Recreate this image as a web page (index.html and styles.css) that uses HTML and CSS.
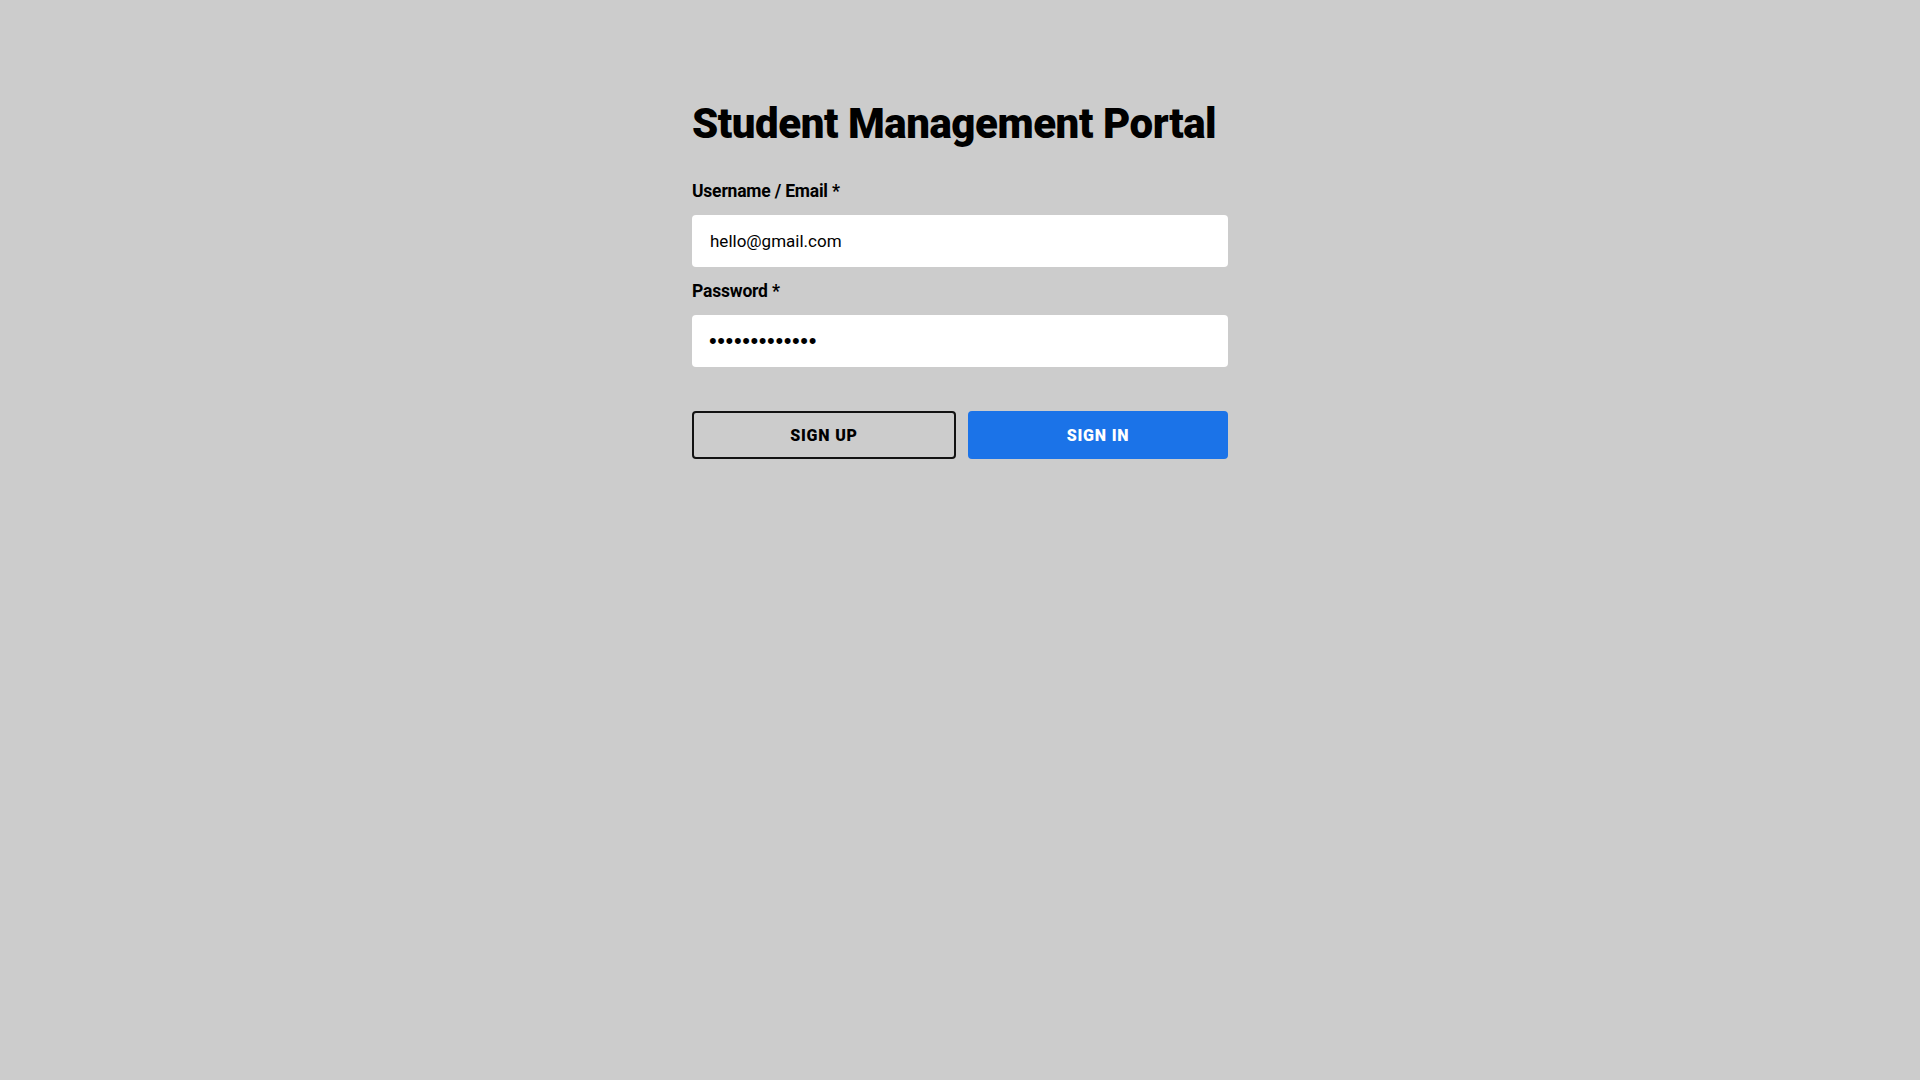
FILE: index.html
```html
<!DOCTYPE html>
<html lang="en">
<head>
<meta charset="utf-8">
<title>Student Management Portal</title>
<link rel="stylesheet" href="styles.css">
</head>
<body>
<main class="page">
  <form class="login" onsubmit="return false">
    <h1 class="title">Student Management Portal</h1>
    <label class="label" for="user">Username / Email *</label>
    <input class="field" id="user" type="text" value="hello@gmail.com">
    <label class="label label-pass" for="pass">Password *</label>
    <input class="field field-pass" id="pass" type="password" value="abcdefghijklm">
    <div class="actions">
      <button class="btn btn-outline" type="button">SIGN UP</button>
      <button class="btn btn-primary" type="submit">SIGN IN</button>
    </div>
  </form>
</main>
</body>
</html>
```

FILE: styles.css
```css
html, body {
  margin: 0;
  padding: 0;
  background: #cccccc;
  height: 100%;
}
body {
  font-family: Roboto, "Liberation Sans", sans-serif;
  color: #000;
}
.page {
  display: flex;
  justify-content: center;
  padding-top: 100px;
}
.login {
  width: 536px;
  display: flex;
  flex-direction: column;
}
.title {
  margin: 0 0 32px 0;
  font-size: 42px;
  font-weight: 900;
  line-height: 48px;
  letter-spacing: -0.45px;
  white-space: nowrap;
}
.label {
  font-size: 17.5px;
  font-weight: 700;
  line-height: 22px;
  letter-spacing: -0.2px;
  margin-bottom: 13px;
}
.label-pass {
  margin-top: 13px;
}
.field {
  box-sizing: border-box;
  height: 52px;
  border: none;
  border-radius: 4px;
  background: #fff;
  padding: 0 18px;
  font-family: Roboto, "Liberation Sans", sans-serif;
  font-size: 17px;
  color: #000;
  outline: none;
}
.field-pass {
  font-family: "Liberation Sans", sans-serif;
  font-size: 22px;
  letter-spacing: 0.6px;
  padding-left: 17px;
}
.actions {
  display: flex;
  gap: 12px;
  margin-top: 44px;
}
.btn {
  box-sizing: border-box;
  height: 48px;
  border-radius: 4px;
  font-family: Roboto, "Liberation Sans", sans-serif;
  font-weight: 900;
  font-size: 16px;
  letter-spacing: 0.8px;
  cursor: pointer;
}
.btn-outline {
  width: 264px;
  background: transparent;
  border: 2px solid #111;
  color: #000;
}
.btn-primary {
  width: 260px;
  background: #1b73e8;
  border: none;
  color: #fff;
}
```
